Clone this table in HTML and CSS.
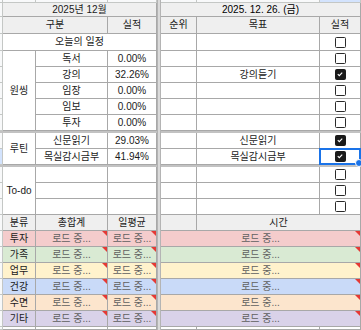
FILE: index.html
```html
<!DOCTYPE html>
<html lang="ko">
<head>
<meta charset="utf-8">
<link rel="stylesheet" href="styles.css">
</head>
<body>
<div class="sheet">
  <div class="freeze"></div>

  <div class="ch"></div><div class="ch"></div><div class="ch"></div><div class="ch"></div>
  <div class="ch"></div><div class="ch"></div><div class="ch ch-sel"></div>

  <div class="rh"></div>
  <div class="c h s3">2025년 12월</div>
  <div class="c h s3 date">2025. 12. 26. (금)</div>

  <div class="rh"></div>
  <div class="c h s2">구분</div>
  <div class="c h">실적</div>
  <div class="c h">순위</div>
  <div class="c h">목표</div>
  <div class="c h">실적</div>

  <div class="rh"></div>
  <div class="c s3">오늘의 일정</div>
  <div class="c"></div><div class="c"></div><div class="c"><span class="cb"></span></div>

  <div class="rh"></div>
  <div class="c r5">원씽</div>
  <div class="c">독서</div><div class="c">0.00%</div>
  <div class="c"></div><div class="c"></div><div class="c"><span class="cb"></span></div>

  <div class="rh"></div>
  <div class="c">강의</div><div class="c">32.26%</div>
  <div class="c"></div><div class="c">강의듣기</div><div class="c"><span class="cb on"><svg viewBox="0 0 10 10"><path d="M2.2 5.2l1.9 1.9 3.7-3.9"/></svg></span></div>

  <div class="rh"></div>
  <div class="c">임장</div><div class="c">0.00%</div>
  <div class="c"></div><div class="c"></div><div class="c"><span class="cb"></span></div>

  <div class="rh"></div>
  <div class="c">임보</div><div class="c">0.00%</div>
  <div class="c"></div><div class="c"></div><div class="c"><span class="cb"></span></div>

  <div class="rh"></div>
  <div class="c">투자</div><div class="c">0.00%</div>
  <div class="c"></div><div class="c"></div><div class="c"><span class="cb"></span></div>

  <div class="sep s4"></div><div class="sep s3"></div>

  <div class="rh"></div>
  <div class="c r2">루틴</div>
  <div class="c">신문읽기</div><div class="c">29.03%</div>
  <div class="c"></div><div class="c">신문읽기</div><div class="c"><span class="cb on"><svg viewBox="0 0 10 10"><path d="M2.2 5.2l1.9 1.9 3.7-3.9"/></svg></span></div>

  <div class="rh rh-sel"></div>
  <div class="c">목실감시금부</div><div class="c">41.94%</div>
  <div class="c"></div><div class="c">목실감시금부</div><div class="c"><span class="cb on"><svg viewBox="0 0 10 10"><path d="M2.2 5.2l1.9 1.9 3.7-3.9"/></svg></span><span class="sel"></span></div>

  <div class="sep s4"></div><div class="sep s3"></div>

  <div class="rh"></div>
  <div class="c r3">To-do</div>
  <div class="c"></div><div class="c"></div>
  <div class="c"></div><div class="c"></div><div class="c"><span class="cb"></span></div>

  <div class="rh"></div>
  <div class="c"></div><div class="c"></div>
  <div class="c"></div><div class="c"></div><div class="c"><span class="cb"></span></div>

  <div class="rh"></div>
  <div class="c"></div><div class="c"></div>
  <div class="c"></div><div class="c"></div><div class="c"><span class="cb"></span></div>

  <div class="rh"></div>
  <div class="c h">분류</div><div class="c h">총합계</div><div class="c h">일평균</div>
  <div class="c h"></div><div class="c h s2">시간</div>

  <div class="rh"></div>
  <div class="c red">투자</div><div class="c red ld err">로드 중...</div><div class="c red ld err">로드 중...</div>
  <div class="c red ld err s3">로드 중...</div>

  <div class="rh"></div>
  <div class="c green">가족</div><div class="c green ld err">로드 중...</div><div class="c green ld err">로드 중...</div>
  <div class="c green ld err s3">로드 중...</div>

  <div class="rh"></div>
  <div class="c yellow">업무</div><div class="c yellow ld err">로드 중...</div><div class="c yellow ld err">로드 중...</div>
  <div class="c yellow ld err s3">로드 중...</div>

  <div class="rh"></div>
  <div class="c blue">건강</div><div class="c blue ld err">로드 중...</div><div class="c blue ld err">로드 중...</div>
  <div class="c blue ld err s3">로드 중...</div>

  <div class="rh"></div>
  <div class="c orange">수면</div><div class="c orange ld err">로드 중...</div><div class="c orange ld err">로드 중...</div>
  <div class="c orange ld err s3">로드 중...</div>

  <div class="rh"></div>
  <div class="c purple">기타</div><div class="c purple ld err">로드 중...</div><div class="c purple ld err">로드 중...</div>
  <div class="c purple ld err s3">로드 중...</div>

  <div class="rh"></div>
  <div class="c"></div><div class="c"></div><div class="c"></div>
  <div class="c"></div><div class="c"></div><div class="c"></div>
</div>
</body>
</html>
```

FILE: styles.css
```css
* { box-sizing: border-box; margin: 0; padding: 0; }
html, body { width: 361px; height: 330px; overflow: hidden; background: #fff; }
body {
  font-family: "Liberation Sans", "Noto Sans CJK KR", sans-serif;
  font-size: 10px;
  color: #1a1a1a;
}
.sheet {
  display: grid;
  grid-template-columns: 3px 33px 72px 49px 4px 36px 123px 41px;
  grid-template-rows: 3px 14px 17px 17px repeat(5, 16px) 2px 16px 16px 2px repeat(3, 16px) 16px repeat(6, 16px) 3px;
}
.freeze {
  grid-column: 5;
  grid-row: 1 / -1;
  background: #dadada;
  border-left: 1px solid #b4b4b4;
  border-right: 1px solid #b4b4b4;
}
.ch {
  background: #f8f9fa;
  border-right: 1px solid #c4c7c5;
  border-bottom: 1px solid #c4c7c5;
}
.ch-sel { background: #d3e3fd; }
.rh {
  background: #f8f9fa;
  border-right: 1px solid #c4c7c5;
  border-bottom: 1px solid #c4c7c5;
}
.rh-sel { background: #d3e3fd; }
.c {
  position: relative;
  display: flex;
  align-items: center;
  justify-content: center;
  white-space: nowrap;
  line-height: 1;
  border-right: 1px solid #a8a8a8;
  border-bottom: 1px solid #a8a8a8;
}
.h { background: #efefef; }
.date { color: #000; }
.s2 { grid-column: span 2; }
.s3 { grid-column: span 3; }
.s4 { grid-column: span 4; }
.r2 { grid-row: span 2; }
.r3 { grid-row: span 3; }
.r5 { grid-row: span 5; }
.sep { background: #c2c2c2; }

.cb {
  display: block;
  width: 11px;
  height: 11px;
  border: 1.5px solid #2a2a2a;
  border-radius: 1.5px;
  background: #fff;
}
.cb.on { background: #1a1a1a; border-color: #1a1a1a; }
.cb svg { display: block; width: 8px; height: 8px; }
.cb svg path { fill: none; stroke: #fff; stroke-width: 1.4; }

.sel {
  position: absolute;
  top: -1px;
  left: -1px;
  right: -1px;
  bottom: -1px;
  border: 2px solid #1a73e8;
}
.sel::after {
  content: "";
  position: absolute;
  right: -4px;
  bottom: -4px;
  width: 6px;
  height: 6px;
  background: #1a73e8;
  border: 1px solid #fff;
  border-radius: 50%;
}

.ld { color: #5f5f5f; }
.err::after {
  content: "";
  position: absolute;
  top: 0;
  right: 0;
  border-top: 5px solid #e53935;
  border-left: 5px solid transparent;
}
.red { background: #f4cccc; }
.green { background: #d9ead3; }
.yellow { background: #fff2cc; }
.blue { background: #c9daf8; }
.orange { background: #fce5cd; }
.purple { background: #d9d2e9; }
```
